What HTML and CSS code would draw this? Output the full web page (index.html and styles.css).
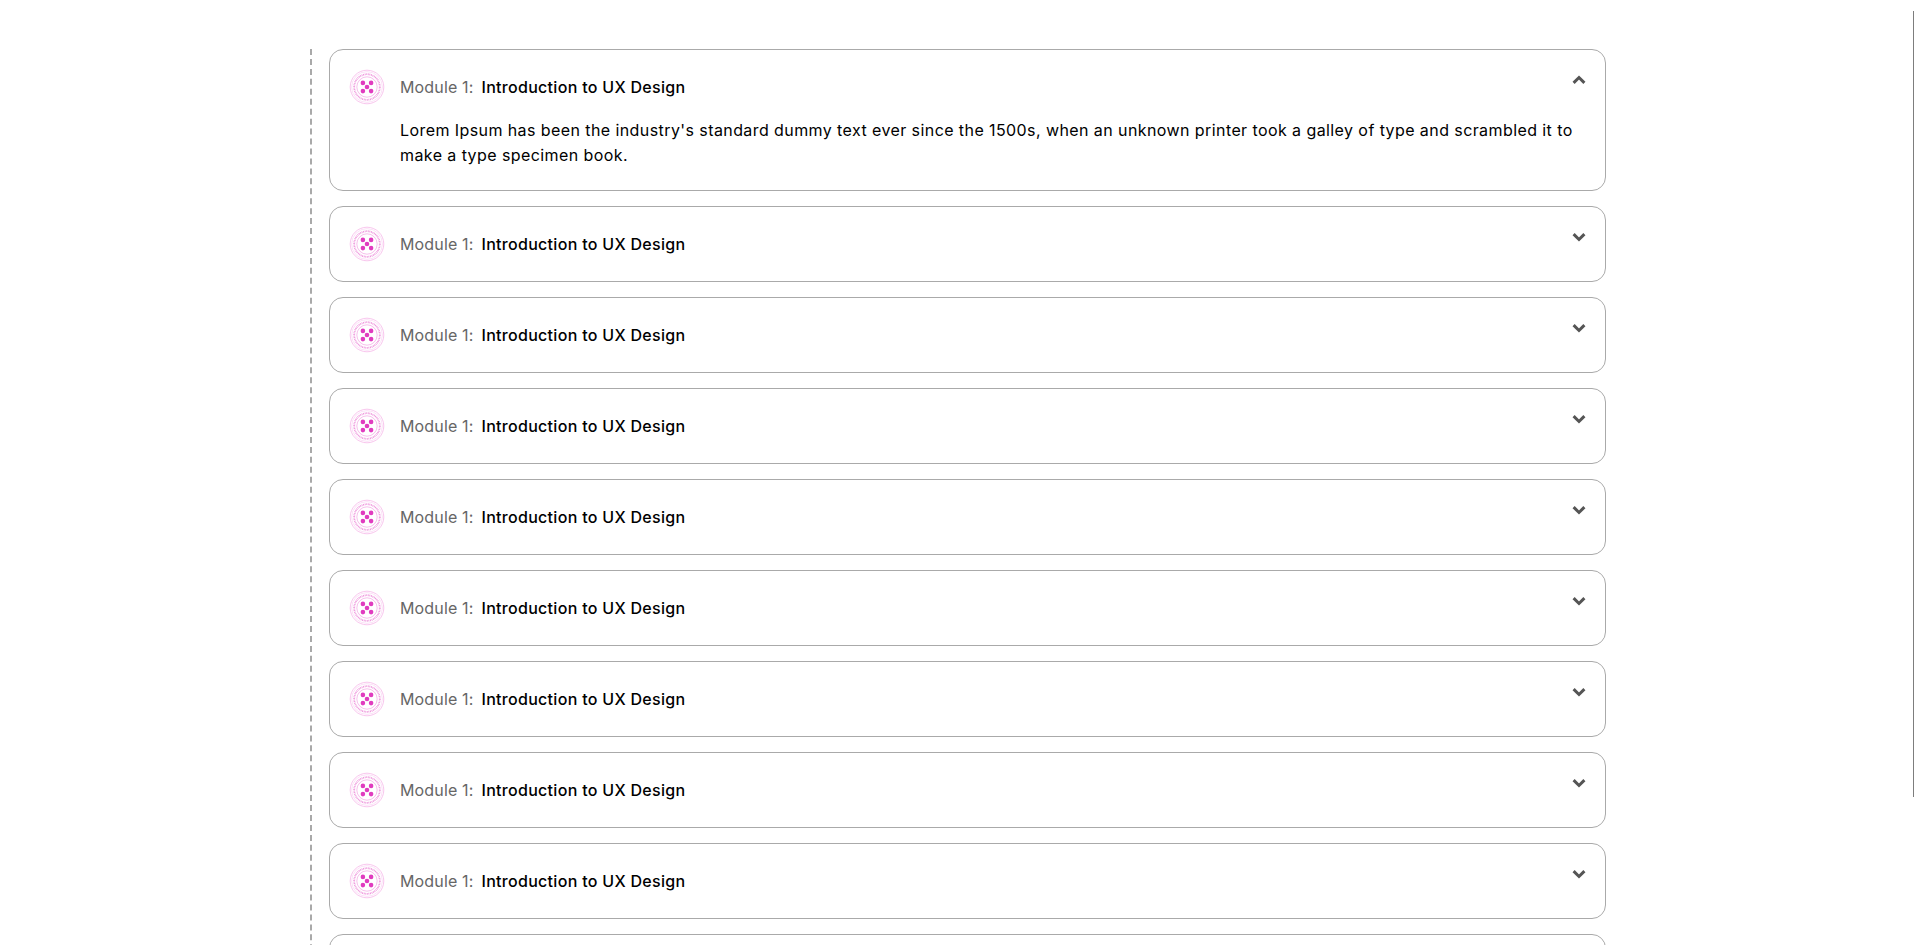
FILE: index.html
```html
<!DOCTYPE html>
<html lang="en">
<head>
<meta charset="utf-8">
<title>Modules</title>
<link rel="stylesheet" href="styles.css">
</head>
<body>
<svg class="defs" width="0" height="0" aria-hidden="true">
  <defs>
    <symbol id="badge" viewBox="0 0 36 36">
      <circle cx="18" cy="18" r="16.8" fill="#fff" stroke="#f6b8e9" stroke-width="0.8"/>
      <circle cx="18" cy="18" r="15.4" fill="none" stroke="#f9cff1" stroke-width="0.6"/>
      <circle cx="18" cy="18" r="12.8" fill="none" stroke="#ea78d3" stroke-width="1.8" stroke-dasharray="0.9 0.7" opacity="0.8"/>
      <circle cx="18" cy="18" r="10.2" fill="none" stroke="#f2a4e3" stroke-width="0.7"/>
      <circle cx="13.9" cy="13.9" r="2.3" fill="#e03cbf"/>
      <circle cx="22.1" cy="13.9" r="2.3" fill="#e03cbf"/>
      <circle cx="18" cy="18" r="2.3" fill="#e03cbf"/>
      <circle cx="13.9" cy="22.1" r="2.3" fill="#e03cbf"/>
      <circle cx="22.1" cy="22.1" r="2.3" fill="#e03cbf"/>
    </symbol>
    <symbol id="chev-down" viewBox="0 0 14 10">
      <path d="M1.6 2.1 7 7.5l5.4-5.4" fill="none" stroke="#555" stroke-width="3"/>
    </symbol>
    <symbol id="chev-up" viewBox="0 0 14 10">
      <path d="M1.6 7.9 7 2.5l5.4 5.4" fill="none" stroke="#555" stroke-width="3"/>
    </symbol>
  </defs>
</svg>
<main class="timeline">
  <section class="card">
    <div class="head">
      <svg class="badge"><use href="#badge"/></svg>
      <h3 class="title"><span class="label">Module 1:</span><span class="name">Introduction to UX Design</span></h3>
      <svg class="chev"><use href="#chev-up"/></svg>
    </div>
    <p class="body">Lorem Ipsum has been the industry's standard dummy text ever since the 1500s, when an unknown printer took a galley of type and scrambled it to make a type specimen book.</p>
  </section>
  <section class="card"><div class="head"><svg class="badge"><use href="#badge"/></svg><h3 class="title"><span class="label">Module 1:</span><span class="name">Introduction to UX Design</span></h3><svg class="chev"><use href="#chev-down"/></svg></div></section>
  <section class="card"><div class="head"><svg class="badge"><use href="#badge"/></svg><h3 class="title"><span class="label">Module 1:</span><span class="name">Introduction to UX Design</span></h3><svg class="chev"><use href="#chev-down"/></svg></div></section>
  <section class="card"><div class="head"><svg class="badge"><use href="#badge"/></svg><h3 class="title"><span class="label">Module 1:</span><span class="name">Introduction to UX Design</span></h3><svg class="chev"><use href="#chev-down"/></svg></div></section>
  <section class="card"><div class="head"><svg class="badge"><use href="#badge"/></svg><h3 class="title"><span class="label">Module 1:</span><span class="name">Introduction to UX Design</span></h3><svg class="chev"><use href="#chev-down"/></svg></div></section>
  <section class="card"><div class="head"><svg class="badge"><use href="#badge"/></svg><h3 class="title"><span class="label">Module 1:</span><span class="name">Introduction to UX Design</span></h3><svg class="chev"><use href="#chev-down"/></svg></div></section>
  <section class="card"><div class="head"><svg class="badge"><use href="#badge"/></svg><h3 class="title"><span class="label">Module 1:</span><span class="name">Introduction to UX Design</span></h3><svg class="chev"><use href="#chev-down"/></svg></div></section>
  <section class="card"><div class="head"><svg class="badge"><use href="#badge"/></svg><h3 class="title"><span class="label">Module 1:</span><span class="name">Introduction to UX Design</span></h3><svg class="chev"><use href="#chev-down"/></svg></div></section>
  <section class="card"><div class="head"><svg class="badge"><use href="#badge"/></svg><h3 class="title"><span class="label">Module 1:</span><span class="name">Introduction to UX Design</span></h3><svg class="chev"><use href="#chev-down"/></svg></div></section>
  <section class="card"><div class="head"><svg class="badge"><use href="#badge"/></svg><h3 class="title"><span class="label">Module 1:</span><span class="name">Introduction to UX Design</span></h3><svg class="chev"><use href="#chev-down"/></svg></div></section>
</main>
<div class="scroll-thumb"></div>
</body>
</html>
```

FILE: styles.css
```css
html, body {
  margin: 0;
  height: 945px;
  overflow: hidden;
  background: #fff;
}
body {
  font-family: Inter, "Noto Sans", sans-serif;
  color: #000;
}
.defs { position: absolute; }
.timeline {
  box-sizing: border-box;
  width: 1296px;
  margin: 49px 0 0 310px;
  padding-left: 17px;
  border-left: 2px dashed #a9a9a9;
  display: flex;
  flex-direction: column;
  gap: 15px;
}
.card {
  border: 1px solid #aaa;
  border-radius: 14px;
  padding: 19px;
  background: #fff;
}
.head {
  display: flex;
  align-items: center;
  gap: 15px;
  height: 36px;
}
.badge {
  width: 36px;
  height: 36px;
  flex: none;
}
.title {
  margin: 0;
  flex: 1;
  font-size: 16px;
  font-weight: 500;
  line-height: 24px;
}
.label {
  font-weight: 400;
  color: #666;
  letter-spacing: 0.15px;
  margin-right: 8px;
}
.name {
  letter-spacing: 0.3px;
}
.chev {
  width: 14px;
  height: 10px;
  flex: none;
  margin: -14px 0 0 0;
}
.body {
  margin: 13px 0 3px 51px;
  font-size: 16px;
  line-height: 25px;
  letter-spacing: 0.415px;
}
.scroll-thumb {
  position: fixed;
  top: 11px;
  right: 0;
  width: 1px;
  height: 786px;
  background: #7d7d7d;
}
```
